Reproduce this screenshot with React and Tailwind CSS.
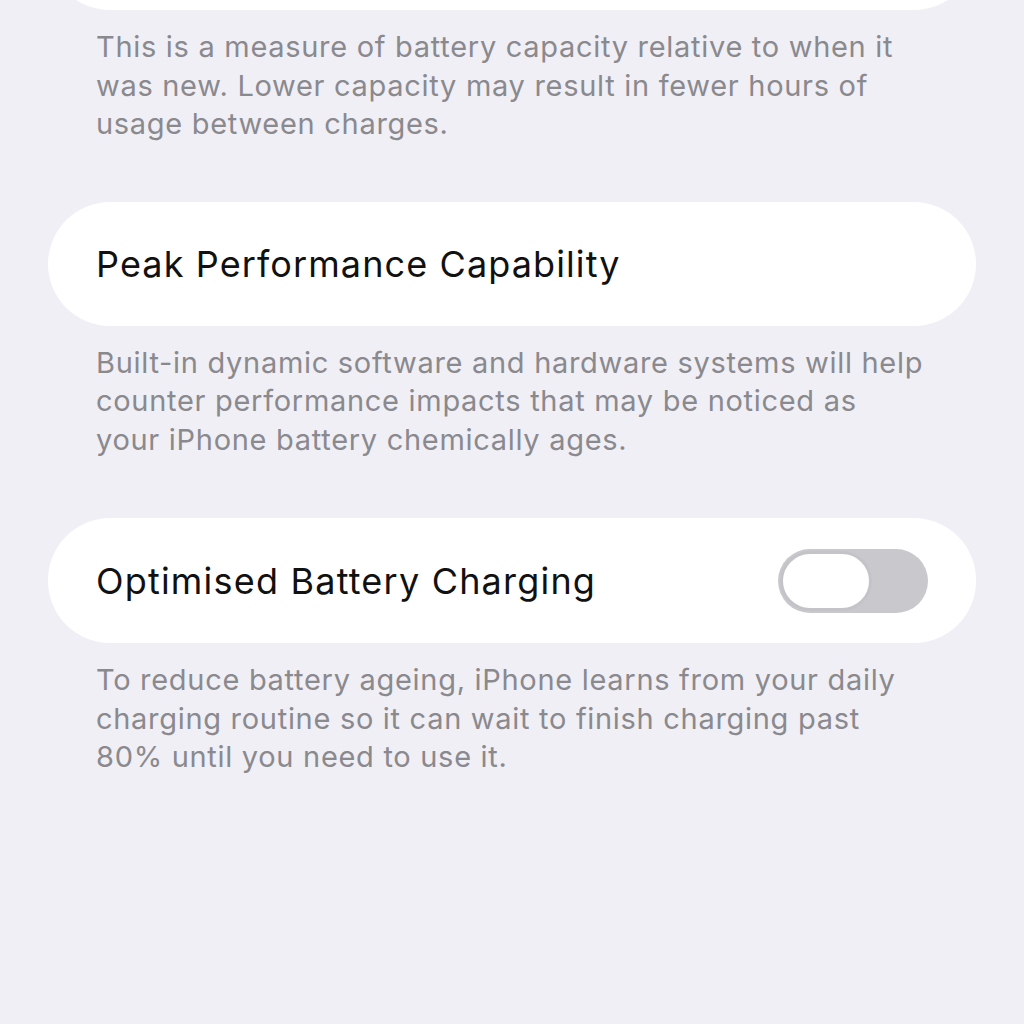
export default function App() {
  const font = { fontFamily: "Inter, 'Noto Sans', sans-serif" };
  return (
    <div className="w-[1024px] h-[1024px] bg-[#f0eff5] overflow-hidden" style={font}>
      <div className="mx-[48px] w-[928px] h-[124px] -mt-[114px] rounded-[62px] bg-white"></div>
      <p className="pl-[96px] pt-[18px] pb-[58px] text-[29px] leading-[38.5px] text-[#8a898e] tracking-[0.7px] whitespace-nowrap">
        This is a measure of battery capacity relative to when it<br />
        was new. Lower capacity may result in fewer hours of<br />
        usage between charges.
      </p>
      <div className="mx-[48px] w-[928px] h-[124px] rounded-[62px] bg-white flex items-center pl-[48px]">
        <span className="text-[36px] text-[#111] tracking-[1.1px]">Peak Performance Capability</span>
      </div>
      <p className="pl-[96px] pt-[18px] pb-[59px] text-[29px] leading-[38.5px] text-[#8a898e] tracking-[0.7px] whitespace-nowrap">
        Built-in dynamic software and hardware systems will help<br />
        counter performance impacts that may be noticed as<br />
        your iPhone battery chemically ages.
      </p>
      <div className="mx-[48px] w-[928px] h-[125px] rounded-[62px] bg-white flex items-center pl-[48px] pr-[48px] justify-between">
        <span className="text-[36px] text-[#111] tracking-[1.2px]">Optimised Battery Charging</span>
        <div className="w-[150px] h-[64px] rounded-full bg-[#c9c9cd] flex items-center pl-[2px]">
          <div className="w-[92px] h-[60px] rounded-full bg-white border-[3px] border-[#c4c4c8]"></div>
        </div>
      </div>
      <p className="pl-[96px] pt-[18px] pb-[58px] text-[29px] leading-[38.5px] text-[#8a898e] tracking-[0.7px] whitespace-nowrap">
        To reduce battery ageing, iPhone learns from your daily<br />
        charging routine so it can wait to finish charging past<br />
        80% until you need to use it.
      </p>
    </div>
  );
}
